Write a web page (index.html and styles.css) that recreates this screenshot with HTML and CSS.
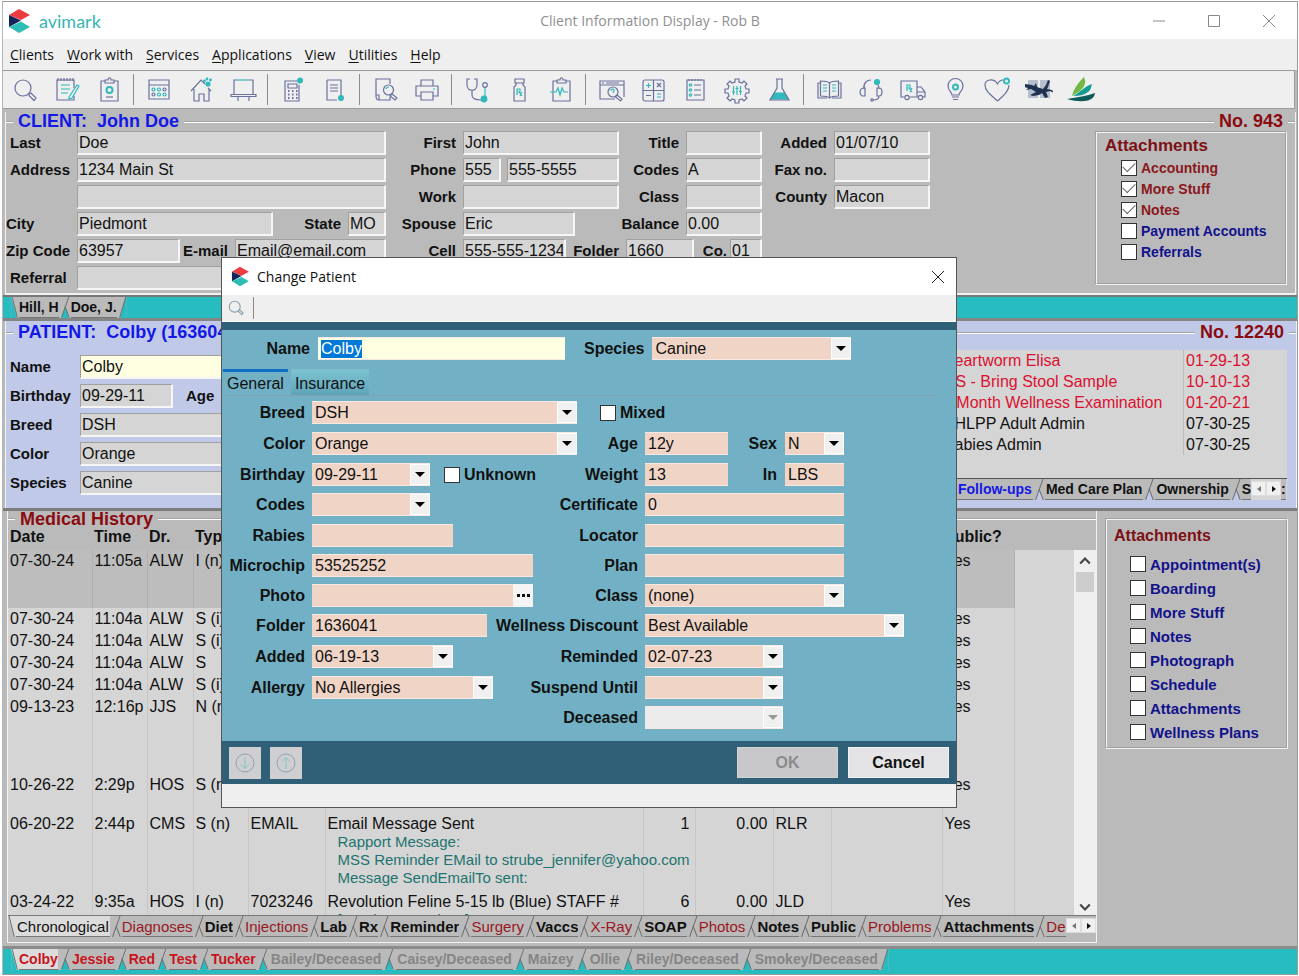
FILE: index.html
```html
<!DOCTYPE html>
<html lang="en">
<head>
<meta charset="utf-8">
<title>Client Information Display</title>
<link rel="stylesheet" href="styles.css">
</head>
<body>
<svg class="defs" aria-hidden="true">
  <symbol id="logo" viewBox="0 0 24 26">
    <path d="M12 1L23 7L14 12L2 7z" fill="#ee3b3f"/>
    <path d="M2 7L14 12.500L2 19z" fill="#13235b"/>
    <path d="M2 19L14 13.500L23 19L12 25z" fill="#2fbdb8"/>
  </symbol>
  <symbol id="edge" viewBox="0 0 12 22">
    <path class="gap" d="M2 22L6 10L10 22z"/>
    <path class="ln" d="M10 0L2.500 21M6 10L10.500 21.500"/>
  </symbol>
  <symbol id="edge-left" viewBox="0 0 8 22">
    <path class="gap" d="M0 0L6 22H0z"/>
    <path class="ln" d="M1 0L6.500 21.500"/>
  </symbol>
  <symbol id="edge-right" viewBox="0 0 10 22">
    <path class="gap" d="M9 0L3 22H10V0z"/>
    <path class="ln" d="M9 0L2.500 21.500"/>
  </symbol>
</svg>
<div class="window">
  <header class="titlebar">
    <div class="brand"><svg class="logo"><use href="#logo"/></svg><span>avimark</span></div>
    <h1>Client Information Display - Rob B</h1>
    <div class="winbtns">
      <button aria-label="Minimize"><svg viewBox="0 0 14 14"><path d="M1 7H13"/></svg></button>
      <button aria-label="Maximize"><svg viewBox="0 0 14 14"><path d="M1.500 1.500H12.500V12.500H1.500z"/></svg></button>
      <button aria-label="Close"><svg viewBox="0 0 14 14"><path d="M1 1L13 13M13 1L1 13"/></svg></button>
    </div>
  </header>
  <nav class="menu">
    <button><u>C</u>lients</button><button><u>W</u>ork with</button><button><u>S</u>ervices</button><button><u>A</u>pplications</button><button><u>V</u>iew</button><button><u>U</u>tilities</button><button><u>H</u>elp</button>
  </nav>
  <div class="toolbar">
    <button aria-label="Search"><svg viewBox="0 0 28 28"><circle cx="12" cy="12" r="8"/><path d="M18 18l2-1 5 5-2 2.500-5-5z"/></svg></button>
    <button aria-label="Notes"><svg viewBox="0 0 28 28"><path d="M21 12V4H4v20h17v-4"/><path d="M5 2v3M8 2v3M11 2v3M14 2v3M17 2v3M20 2v3"/><path class="t" d="M8 9h9M8 13h9M8 17h7M16 21l8-12 2 1-7 12-3 1z"/></svg></button>
    <button aria-label="Clipboard"><svg viewBox="0 0 28 28"><path d="M10 5H6v20h17V5h-4M10 7h9V4h-3c0-3-3-3-3 0h-3z"/><circle class="t thick" cx="14.500" cy="14" r="3"/><path d="M11 21h7"/></svg></button>
    <i></i>
    <button aria-label="Calendar"><svg viewBox="0 0 28 28"><path d="M4 4h20v19H4zM4 9h20"/><g class="t"><circle cx="8.500" cy="13.500" r="1.500"/><circle cx="14" cy="13.500" r="1.500"/></g><circle cx="19.500" cy="13.500" r="1.500"/><circle cx="8.500" cy="18.500" r="1.500"/><g class="t"><circle cx="14" cy="18.500" r="1.500"/><circle cx="19.500" cy="18.500" r="1.500"/></g></svg></button>
    <button aria-label="Boarding"><svg viewBox="0 0 28 28"><path d="M4 15L14 4l4 4M24 15l-3-3M7 13v12h5v-7h5v7h5V13"/><g class="tf"><circle cx="21" cy="8" r="2"/><circle cx="17.500" cy="5" r=".8"/><circle cx="20" cy="3" r=".8"/><circle cx="23.500" cy="4" r=".8"/></g></svg></button>
    <button aria-label="Whiteboard"><svg viewBox="0 0 28 28"><path d="M5 18V4h4M20 4h4v14M2 18.500h25v2H2zM9 21v4M20 21v4"/><path class="t" d="M9 4h11"/></svg></button>
    <i></i>
    <button aria-label="Calculator"><svg viewBox="0 0 28 28"><path d="M20 9v16H6V5h12M9 8h9v4H9z"/><path d="M9 15h1.500M13 15h1.500M17 15h1.500M9 18.500h1.500M13 18.500h1.500M17 18.500h1.500M9 22h1.500M13 22h1.500M17 22h1.500" class="thick"/><circle class="tf" cx="21" cy="4.500" r="2.400"/></svg></button>
    <button aria-label="Invoice"><svg viewBox="0 0 28 28"><path d="M6 4h14v15M16 24H6V4M9 9h8M9 12h8M9 15h8"/><circle class="tf" cx="20" cy="22" r="2.400"/></svg></button>
    <i></i>
    <button aria-label="Find document"><svg viewBox="0 0 28 28"><path d="M19 8V3H5v17c0 2 1 4 3 4h11v-3M5 19h3v5"/><circle cx="17.500" cy="14" r="5"/><path class="t" d="M15 13a3 3 0 0 1 3-2"/><path d="M21 18l5 4-2 2-5-4z"/></svg></button>
    <button aria-label="Print"><svg viewBox="0 0 28 28"><path d="M8 10V4h12v6M8 20H3V10h22v10h-5M8 16h12v8H8z"/><path class="t" d="M20 13h2"/></svg></button>
    <i></i>
    <button aria-label="Examination"><svg viewBox="0 0 28 28"><path d="M7 3H4v6c0 7 10 7 10 0V3h-3M9 14v5c0 4 5 5 9 5"/><path class="t" d="M22 12v9"/><circle cx="22" cy="9" r="2.300"/><circle class="tf" cx="21" cy="23" r="2.800"/></svg></button>
    <button aria-label="Medication"><svg viewBox="0 0 28 28"><path d="M10 3h9v4h-9zM11 7v2l-2 2v14h11V11l-2-2V7"/><path class="t" d="M12 19v-6h3v3h-3M14 16l3 4M17 16l-2 4"/></svg></button>
    <button aria-label="Vitals"><svg viewBox="0 0 28 28"><path d="M10 5H6v20h17V5h-4M10 7h9V4h-3c0-3-3-3-3 0h-3z"/><path class="t" d="M3 16h6l2-4 2 7 2-7 2 4h4"/></svg></button>
    <i></i>
    <button aria-label="Web search"><svg viewBox="0 0 28 28"><path d="M18 23H3V5h24v16M3 9h24M5 7h2M9 7h13"/><circle cx="16" cy="16" r="5"/><path class="t" d="M14 15c0-3 4-2 3 0l-1 2"/><path d="M20 19l5 4-1.500 2-5-4z"/></svg></button>
    <button aria-label="Calculations"><svg viewBox="0 0 28 28"><rect x="4" y="4" width="21" height="21" rx="2"/><path d="M14.500 4v21M4 14.500h21M7 19.500h5M18 7l4 4M22 7l-4 4"/><path class="t" d="M9.500 7v5M7 9.500h5M18 18h4M18 21h4"/></svg></button>
    <button aria-label="Checklist"><svg viewBox="0 0 28 28"><path d="M6 4h17v20H6zM13 9h7M13 14h7M13 19h7M8 3v2M11 3v2M14 3v2M17 3v2M20 3v2"/><g class="t"><circle cx="9.500" cy="9" r="1.200"/><circle cx="9.500" cy="14" r="1.200"/><circle cx="9.500" cy="19" r="1.200"/></g></svg></button>
    <button aria-label="Settings"><svg viewBox="0 0 28 28"><path d="M12 3h4v3l3 1 2-2 3 3-2 2 1 3h3v4h-3l-1 3 2 2-3 3-2-2-3 1v3h-4v-3l-3-1-2 2-3-3 2-2-1-3H2v-4h3l1-3-2-2 3-3 2 2 3-1z"/><path class="t" d="M10.500 10v9M14 10v9M17.500 10v9M9 16h3M12.500 12.500h3M16 15.500h3"/></svg></button>
    <button aria-label="Laboratory"><svg viewBox="0 0 28 28"><path class="tf" d="M10 17h9l4 6H6z"/><path d="M11 3h7M12 3v9L5 24h19l-7-12V3"/></svg></button>
    <i></i>
    <button aria-label="Library"><svg viewBox="0 0 28 28"><path d="M14.500 7c-2-2-6-2-9-2v15c4 0 7 0 9 2 2-2 5-2 9-2V5c-3 0-7 0-9 2zM14.500 7v15M5.500 7H3v15h9M23.500 7H26v15h-9"/><path class="t" d="M8 9h4M8 12h4M8 15h4M17 9h4M17 12h4M17 15h4"/></svg></button>
    <button aria-label="Support"><svg viewBox="0 0 28 28"><path d="M7 13C6 7 10 4 14 4M21 9c1 2 1 3 1 4M7 12c-5 0-5 8-1 8h2v-8zM22 12h-2v8h2c4 0 4-8 0-8zM22 20c0 3-3 4-6 4"/><circle class="tf" cx="20" cy="6" r="2.500"/><circle cx="15" cy="24" r="1.200"/></svg></button>
    <button aria-label="Delivery"><svg viewBox="0 0 28 28"><path d="M5 21H2V5h16v16h-7M18 11h4l4 5v5h-2M18 16h8"/><circle cx="8" cy="21.500" r="2.200"/><circle cx="21.500" cy="21.500" r="2.200"/><path class="t" d="M8 15V9h3v3H8M10 12l3 4M13 12l-2 4"/></svg></button>
    <button aria-label="Ideas"><svg viewBox="0 0 28 28"><path d="M11 19c0-3-4-4-4-9a7.500 7.500 0 0 1 15 0c0 5-4 6-4 9zM11 21h7M12 23.500h5"/><circle class="t thick" cx="14.500" cy="11" r="2.500"/></svg></button>
    <button aria-label="Wellness"><svg viewBox="0 0 28 28"><path d="M14.500 25C8 19 2 15 2 9c0-6 9-7 12.500-1C16 5 18 4 20 4M26 9c0 6-5 10-11.500 16"/><circle class="t thick" cx="23.500" cy="5" r="2.500"/></svg></button>
    <button aria-label="Imaging"><svg viewBox="0 0 28 28"><path d="M3 4h10v18H3zM15 4h10v18H15z" fill="#b8bfce" stroke="none"/><path class="nf" d="M0 8l7 1 2 1 2-3 1 4 6 2 3-4 2-5 2 1-2 6-1 2 5 1 2 3-4-2-4 1 2 5-3 1-3-5-3 2-6 1-3-1 6-3-5-3-5 1 2-2-4-1z"/></svg></button>
    <button aria-label="Card"><svg viewBox="0 0 28 28"><path d="M5 20C7 12 12 6 17 1c1 3 2 5 0 9-2 4-7 7-12 10z" fill="#72b843" stroke="none"/><path d="M6 20c6-3 12-10 19-12-1 3-1 6-4 8-4 3-9 4-15 4z" fill="#119d91" stroke="none"/><path d="M0 23c10-2 20-3 28-6-1 9-14 10-28 6z" fill="#0c5a5a" stroke="none"/></svg></button>
  </div>

  <section class="panel client">
    <div class="caption"><h2 class="blue">CLIENT:&nbsp; John Doe</h2><b>No. 943</b></div>
    <div class="client-body">
      <div class="rows grp-a">
        <div class="row"><label for="c-last">Last</label><input id="c-last" class="grow" value="Doe"></div>
        <div class="row"><label for="c-addr">Address</label><input id="c-addr" class="grow" value="1234 Main St"></div>
        <div class="row"><label for="c-addr2"></label><input id="c-addr2" class="grow" aria-label="Address line 2"></div>
        <div class="row near"><label for="c-city">City</label><input id="c-city" class="w196" value="Piedmont"><label for="c-state" class="mid">State</label><input id="c-state" class="w38" value="MO"></div>
        <div class="row near"><label for="c-zip">Zip Code</label><input id="c-zip" class="w102" value="63957"><label for="c-mail" class="mid">E-mail</label><input id="c-mail" class="w150" value="Email@email.com"></div>
        <div class="row"><label for="c-ref">Referral</label><input id="c-ref" class="grow"></div>
      </div>
      <div class="rows grp-b">
        <div class="row"><label for="c-first">First</label><input id="c-first" class="w155" value="John"><label for="c-title" class="mid">Title</label><input id="c-title" class="w75"></div>
        <div class="row"><label for="c-area">Phone</label><input id="c-area" class="w38" value="555"><input aria-label="Phone number" class="w110" value="555-5555"><label for="c-codes" class="mid">Codes</label><input id="c-codes" class="w75" value="A"></div>
        <div class="row"><label for="c-work">Work</label><input id="c-work" class="w155"><label for="c-class" class="mid">Class</label><input id="c-class" class="w75"></div>
        <div class="row"><label for="c-sp">Spouse</label><input id="c-sp" class="w110" value="Eric"><label for="c-bal" class="mid">Balance</label><input id="c-bal" class="w75" value="0.00"></div>
        <div class="row"><label for="c-cell">Cell</label><input id="c-cell" class="w102" value="555-555-1234"><label for="c-fold" class="mid">Folder</label><input id="c-fold" class="w68" value="1660"><label for="c-co" class="co">Co.</label><input id="c-co" class="w32" value="01"></div>
      </div>
      <div class="rows grp-c">
        <div class="row"><label for="c-added">Added</label><input id="c-added" class="w95" value="01/07/10"></div>
        <div class="row"><label for="c-fax">Fax no.</label><input id="c-fax" class="w95"></div>
        <div class="row"><label for="c-county">County</label><input id="c-county" class="w95" value="Macon"></div>
      </div>
      <aside class="attach small">
        <h3>Attachments</h3>
        <label class="red"><input type="checkbox" checked>Accounting</label>
        <label class="red"><input type="checkbox" checked>More Stuff</label>
        <label class="red"><input type="checkbox" checked>Notes</label>
        <label><input type="checkbox">Payment Accounts</label>
        <label><input type="checkbox">Referrals</label>
      </aside>
    </div>
  </section>

  <div class="strip tabs bold">
    <svg class="el"><use href="#edge-left"/></svg><button>Hill, H</button><svg class="ed"><use href="#edge"/></svg><button>Doe, J.</button><svg class="er"><use href="#edge-right"/></svg>
  </div>

  <section class="panel patient">
    <div class="caption"><h2 class="blue">PATIENT:&nbsp; Colby (1636041)</h2><b>No. 12240</b></div>
    <div class="patient-body">
      <div class="rows grp-p">
        <div class="row"><label for="p-name">Name</label><input id="p-name" class="grow cream" value="Colby"></div>
        <div class="row"><label for="p-bd">Birthday</label><input id="p-bd" class="w92" value="09-29-11"><label for="p-age" class="age">Age</label><input id="p-age" class="grow"></div>
        <div class="row"><label for="p-breed">Breed</label><input id="p-breed" class="grow" value="DSH"></div>
        <div class="row"><label for="p-color">Color</label><input id="p-color" class="grow" value="Orange"></div>
        <div class="row"><label for="p-spec">Species</label><input id="p-spec" class="grow" value="Canine"></div>
      </div>
      <div class="follow">
        <table>
          <tr class="due"><td>Heartworm Elisa</td><td>01-29-13</td></tr>
          <tr class="due"><td>OS - Bring Stool Sample</td><td>10-10-13</td></tr>
          <tr class="due"><td>6 Month Wellness Examination</td><td>01-20-21</td></tr>
          <tr><td>DHLPP Adult Admin</td><td>07-30-25</td></tr>
          <tr><td>Rabies Admin</td><td>07-30-25</td></tr>
        </table>
        <div class="tabs bold">
          <svg class="el"><use href="#edge-left"/></svg><button class="bl">Follow-ups</button><svg class="ed"><use href="#edge"/></svg><button>Med Care Plan</button><svg class="ed"><use href="#edge"/></svg><button>Ownership</button><svg class="ed"><use href="#edge"/></svg><button class="cut">S</button>
          <span class="scrollers"><button class="off" aria-label="Previous tabs"></button><button aria-label="Next tabs"></button></span>
          <button class="cut">:</button>
        </div>
      </div>
    </div>
  </section>

  <section class="medical">
    <div class="history">
      <div class="caption"><h2>Medical History</h2></div>
      <div class="history-body">
        <div class="grid">
          <table>
            <colgroup><col class="c84"><col class="c54"><col class="c47"><col class="c54"><col class="c77"><col class="c318"><col class="c52"><col class="c78"><col class="c58"><col class="c112"><col class="c72"></colgroup>
            <thead><tr><th>Date</th><th>Time</th><th>Dr.</th><th>Type</th><th></th><th></th><th></th><th></th><th></th><th></th><th>Public?</th></tr></thead>
            <tbody>
              <tr class="sel"><td>07-30-24</td><td>11:05a</td><td>ALW</td><td>I (n)</td><td></td><td></td><td></td><td></td><td></td><td></td><td>Yes</td></tr>
              <tr><td>07-30-24</td><td>11:04a</td><td>ALW</td><td>S (i)</td><td></td><td></td><td></td><td></td><td></td><td></td><td>Yes</td></tr>
              <tr><td>07-30-24</td><td>11:04a</td><td>ALW</td><td>S (i)</td><td></td><td></td><td></td><td></td><td></td><td></td><td>Yes</td></tr>
              <tr><td>07-30-24</td><td>11:04a</td><td>ALW</td><td>S</td><td></td><td></td><td></td><td></td><td></td><td></td><td>Yes</td></tr>
              <tr><td>07-30-24</td><td>11:04a</td><td>ALW</td><td>S (i)</td><td></td><td></td><td></td><td></td><td></td><td></td><td>Yes</td></tr>
              <tr class="tall"><td>09-13-23</td><td>12:16p</td><td>JJS</td><td>N (n)</td><td></td><td></td><td></td><td></td><td></td><td></td><td>Yes</td></tr>
              <tr class="two"><td>10-26-22</td><td>2:29p</td><td>HOS</td><td>S (n)</td><td></td><td></td><td></td><td></td><td></td><td></td><td>Yes</td></tr>
              <tr class="tall"><td>06-20-22</td><td>2:44p</td><td>CMS</td><td>S (n)</td><td>EMAIL</td><td>Email Message Sent<p>Rapport Message:</p><p>MSS Reminder EMail to strube_jennifer@yahoo.com</p><p>Message SendEmailTo sent:</p></td><td class="num">1</td><td class="num">0.00</td><td>RLR</td><td></td><td>Yes</td></tr>
              <tr class="tall"><td>03-24-22</td><td>9:35a</td><td>HOS</td><td>I (n)</td><td>7023246</td><td>Revolution Feline 5-15 lb (Blue) STAFF #<p>[Send to Questions]</p></td><td class="num">6</td><td class="num">0.00</td><td>JLD</td><td></td><td>Yes</td></tr>
            </tbody>
          </table>
          <div class="scroll"><button aria-label="Scroll up"><svg viewBox="0 0 10 8"><path d="M1 6L5 2L9 6"/></svg></button><span></span><button aria-label="Scroll down"><svg viewBox="0 0 10 8"><path d="M1 2L5 6L9 2"/></svg></button></div>
        </div>
      </div>
      <div class="tabs mixed">
        <svg class="el"><use href="#edge-left"/></svg><button class="active">Chronological</button><svg class="ed"><use href="#edge"/></svg><button class="r">Diagnoses</button><svg class="ed"><use href="#edge"/></svg><button class="b">Diet</button><svg class="ed"><use href="#edge"/></svg><button class="r">Injections</button><svg class="ed"><use href="#edge"/></svg><button class="b">Lab</button><svg class="ed"><use href="#edge"/></svg><button class="b">Rx</button><svg class="ed"><use href="#edge"/></svg><button class="b">Reminder</button><svg class="ed"><use href="#edge"/></svg><button class="r">Surgery</button><svg class="ed"><use href="#edge"/></svg><button class="b">Vaccs</button><svg class="ed"><use href="#edge"/></svg><button class="r">X-Ray</button><svg class="ed"><use href="#edge"/></svg><button class="b">SOAP</button><svg class="ed"><use href="#edge"/></svg><button class="r">Photos</button><svg class="ed"><use href="#edge"/></svg><button class="b">Notes</button><svg class="ed"><use href="#edge"/></svg><button class="b">Public</button><svg class="ed"><use href="#edge"/></svg><button class="r">Problems</button><svg class="ed"><use href="#edge"/></svg><button class="b">Attachments</button><svg class="ed"><use href="#edge"/></svg><button class="r last">Den</button>
        <span class="scrollers"><button class="off" aria-label="Previous tabs"></button><button aria-label="Next tabs"></button></span>
      </div>
    </div>
    <aside class="attach">
      <h3>Attachments</h3>
      <label><input type="checkbox">Appointment(s)</label>
      <label><input type="checkbox">Boarding</label>
      <label><input type="checkbox">More Stuff</label>
      <label><input type="checkbox">Notes</label>
      <label><input type="checkbox">Photograph</label>
      <label><input type="checkbox">Schedule</label>
      <label><input type="checkbox">Attachments</label>
      <label><input type="checkbox">Wellness Plans</label>
    </aside>
  </section>

  <div class="strip tabs bold pets">
    <svg class="el"><use href="#edge-left"/></svg><button class="active">Colby</button><svg class="ed"><use href="#edge"/></svg><button>Jessie</button><svg class="ed"><use href="#edge"/></svg><button>Red</button><svg class="ed"><use href="#edge"/></svg><button>Test</button><svg class="ed"><use href="#edge"/></svg><button>Tucker</button><svg class="ed"><use href="#edge"/></svg><button class="g">Bailey/Deceased</button><svg class="ed"><use href="#edge"/></svg><button class="g">Caisey/Deceased</button><svg class="ed"><use href="#edge"/></svg><button class="g">Maizey</button><svg class="ed"><use href="#edge"/></svg><button class="g">Ollie</button><svg class="ed"><use href="#edge"/></svg><button class="g">Riley/Deceased</button><svg class="ed"><use href="#edge"/></svg><button class="g">Smokey/Deceased</button><svg class="er"><use href="#edge-right"/></svg>
  </div>

  <div class="dialog" role="dialog" aria-labelledby="dlg-title">
    <div class="dlg-title"><svg class="logo"><use href="#logo"/></svg><h2 id="dlg-title">Change Patient</h2><button aria-label="Close"><svg viewBox="0 0 14 14"><path d="M1 1L13 13M13 1L1 13"/></svg></button></div>
    <div class="dlg-tools"><button aria-label="Search"><svg viewBox="0 0 28 28"><circle cx="12" cy="12" r="8.500"/><path d="M18 18l2-1 5 5-2 2.500-5-5z"/></svg></button><i></i></div>
    <div class="dlg-body">
      <div class="dlg-top">
        <label for="d-name">Name</label><input id="d-name" class="name" value="Colby">
        <label for="d-species">Species</label><span class="combo f198"><select id="d-species"><option>Canine</option></select><b></b></span>
      </div>
      <div class="dlg-tabs"><button class="on">General</button><button>Insurance</button></div>
      <div class="form">
        <div class="line"><label for="d-breed">Breed</label><span class="combo f265"><select id="d-breed"><option>DSH</option></select><b></b></span><label class="chk mixed-chk"><input type="checkbox">Mixed</label></div>
        <div class="line"><label for="d-color">Color</label><span class="combo f265"><select id="d-color"><option>Orange</option></select><b></b></span><label class="second" for="d-age">Age</label><div class="cell"><input id="d-age" class="f83" value="12y"><label for="d-sex">Sex</label><span class="combo f59"><select id="d-sex"><option>N</option></select><b></b></span></div></div>
        <div class="line"><label for="d-bd">Birthday</label><span class="combo f118"><select id="d-bd"><option>09-29-11</option></select><b></b></span><label class="chk unk-chk"><input type="checkbox">Unknown</label><label class="second" for="d-w">Weight</label><div class="cell"><input id="d-w" class="f83" value="13"><label for="d-in">In</label><input id="d-in" class="f59" value="LBS"></div></div>
        <div class="line"><label for="d-codes">Codes</label><span class="combo f118"><select id="d-codes"><option></option></select><b></b></span><label class="second" for="d-cert">Certificate</label><div class="cell"><input id="d-cert" class="f198" value="0"></div></div>
        <div class="line"><label for="d-rab">Rabies</label><input id="d-rab" class="f141"><label class="second" for="d-loc">Locator</label><div class="cell"><input id="d-loc" class="f198"></div></div>
        <div class="line"><label for="d-chip">Microchip</label><input id="d-chip" class="f221" value="53525252"><label class="second" for="d-plan">Plan</label><div class="cell"><input id="d-plan" class="f198"></div></div>
        <div class="line"><label for="d-photo">Photo</label><span class="browse f221"><input id="d-photo"><button aria-label="Browse"><i></i><i></i><i></i></button></span><label class="second" for="d-class">Class</label><div class="cell"><span class="combo f198"><select id="d-class"><option>(none)</option></select><b></b></span></div></div>
        <div class="line"><label for="d-folder">Folder</label><input id="d-folder" class="f175" value="1636041"><label class="second" for="d-disc">Wellness Discount</label><div class="cell"><span class="combo f259"><select id="d-disc"><option>Best Available</option></select><b></b></span></div></div>
        <div class="line"><label for="d-added">Added</label><span class="combo f141"><select id="d-added"><option>06-19-13</option></select><b></b></span><label class="second" for="d-rem">Reminded</label><div class="cell"><span class="combo f138"><select id="d-rem"><option>02-07-23</option></select><b></b></span></div></div>
        <div class="line"><label for="d-all">Allergy</label><span class="combo f181"><select id="d-all"><option>No Allergies</option></select><b></b></span><label class="second" for="d-sus">Suspend Until</label><div class="cell"><span class="combo f138"><select id="d-sus"><option></option></select><b></b></span></div></div>
        <div class="line"><label class="second" for="d-dec">Deceased</label><div class="cell"><span class="combo disabled f138"><select id="d-dec" disabled><option></option></select><b></b></span></div></div>
      </div>
    </div>
    <div class="dlg-foot">
      <button class="sq" aria-label="Next"><svg viewBox="0 0 24 24"><circle cx="12" cy="12" r="9"/><path d="M12 6v11M8 13.500l4 4 4-4"/></svg></button>
      <button class="sq" aria-label="Previous"><svg viewBox="0 0 24 24"><circle cx="12" cy="12" r="9"/><path d="M12 18V7M8 10.500l4-4 4 4"/></svg></button>
      <button class="cmd ok" disabled>OK</button><button class="cmd">Cancel</button>
    </div>
    <div class="dlg-status"></div>
  </div>
</div>
<script src="script.js"></script>
</body>
</html>
```
FILE: script.js
```js
document.getElementById('d-name').select();
```
FILE: styles.css
```css
* { box-sizing: border-box; }
body { margin: 0; background: #fff; font: 16px "Liberation Sans", Arial, sans-serif; color: #111; }
button { font: inherit; color: inherit; background: none; border: 0; padding: 0; margin: 0; }
input, select { font: inherit; color: inherit; margin: 0; min-width: 0; border-radius: 0; outline: 0; }
h1, h2, h3, p { margin: 0; }
svg { display: block; flex: none; fill: none; }
.defs { position: absolute; width: 0; height: 0; }
.window { position: relative; display: flex; flex-direction: column; min-height: 974px; margin: 1px 1px 1px 2px; border: 1px solid #9a9a9a; border-left-color: #b5b5b5; background: #bababa; overflow: hidden; }

/* title bar, menu, toolbar */
.titlebar { display: grid; grid-template-columns: 1fr auto 1fr; align-items: center; height: 37px; background: #fff; }
.brand { display: flex; align-items: center; gap: 8px; padding-left: 4px; font: 18px Lato, sans-serif; color: #37b5b4; }
.logo { width: 24px; height: 26px; }
.titlebar h1 { font: 14px "Open Sans", sans-serif; color: #8f8f8f; }
.winbtns { display: flex; justify-content: flex-end; gap: 41px; padding-right: 21px; }
.winbtns svg, .dlg-title button svg { width: 14px; height: 14px; stroke: #888; }
.menu { display: flex; align-items: center; gap: 13px; height: 31px; padding-left: 7px; background: #efefef; font: 14px "Open Sans", sans-serif; }
.menu u { text-underline-offset: 2px; }
.toolbar { display: flex; align-items: center; height: 39px; margin-right: 2px; padding-left: 1px; background: #efefef; border: 1px solid #9c9c9c; border-left: 0; }
.toolbar button { display: flex; justify-content: center; width: 42px; }
.toolbar i { width: 1px; height: 31px; margin: 0 4px 0 3px; background: #8c8c8c; }
.toolbar svg { width: 28px; height: 28px; stroke: #6a719c; stroke-width: 1.200; }
.toolbar .t { stroke: #2fb9ba; }
.toolbar .thick { stroke-width: 2; }
.toolbar .tf { fill: #2fb9ba; stroke: #2fb9ba; }
.toolbar .nf { fill: #1f3350; stroke: none; }

/* framed panels */
.caption { position: relative; z-index: 1; display: flex; align-items: center; gap: 5px; height: 19px; white-space: nowrap; }
.caption::before, .caption::after { content: ""; box-sizing: content-box; width: 7px; height: 0; border-top: 1px solid #a2a2a2; border-bottom: 1px solid #fff; }
.caption h2 { display: flex; flex: 1; align-items: center; gap: 5px; font: bold 18px/19px "Liberation Sans", Arial, sans-serif; color: #8a0b10; }
.caption h2::after { content: ""; flex: 1; border-top: 1px solid #a2a2a2; border-bottom: 1px solid #fff; }
.caption h2.blue { color: #1418e6; }
.caption b { font-size: 18px; color: #8a0b10; }
.panel { position: relative; border: 1px solid #f2f2f2; border-top: 0; margin: 0 1px 0 2px; }
.client { margin-top: 3px; border-bottom: 2px solid #f2f2f2; }
.client-body { display: flex; }
.rows .row { display: flex; align-items: center; height: 27px; padding-bottom: 3px; }
.row label { font-size: 15px; font-weight: bold; white-space: nowrap; padding-bottom: 2px; }
.row input { height: 24px; padding: 0 1px; background: #d5d5d5; border: 1px solid #a0a0a0; border-right: 2px solid #f6f6f6; border-bottom: 2px solid #f6f6f6; }
.row .grow { flex: 1; width: 0; }
.w32 { width: 32px; } .w38 { width: 38px; } .w68 { width: 68px; } .w75 { width: 76px; } .w92 { width: 93px; } .w95 { width: 96px; }
.w102 { width: 103px; } .w110 { width: 112px; } .w150 { width: 151px; } .w155 { width: 156px; } .w196 { width: 196px; }
.row .mid { flex: 1; text-align: right; padding-right: 7px; }
.row .co { width: 36px; padding-right: 3px; text-align: right; }
.grp-a { width: 380px; }
.grp-a .row > label:first-child { width: 71px; padding-left: 4px; }
.grp-a .near > label:first-child { padding-left: 0; }
.grp-b { width: 376px; }
.grp-b .row > label:first-child { width: 77px; padding-right: 7px; text-align: right; }
.grp-b input + input { margin-left: 6px; }
.grp-c { width: 168px; }
.grp-c .row > label:first-child { flex: 1; padding-right: 7px; text-align: right; }

/* attachment lists */
.attach { display: flex; flex-direction: column; border: 2px groove #f4f4f4; margin-left: auto; }
.attach h3 { font-size: 16px; color: #7d1015; }
.attach label { display: flex; align-items: center; gap: 4px; padding-left: 24px; font-weight: bold; font-size: 15px; color: #12128c; white-space: nowrap; }
.attach.small { width: 192px; height: 154px; margin-right: 8px; padding: 2px 0 0 8px; }
.attach.small h3 { font-size: 17px; line-height: 22px; }
.attach.small label { height: 21px; padding-left: 16px; font-size: 14px; }
.attach label.red { color: #8b181c; }
input[type="checkbox"] { appearance: none; display: grid; place-items: center; width: 16px; height: 16px; flex: none; margin: 0; background: #fff; border: 1px solid #333; }
input[type="checkbox"]:checked::before { content: ""; width: 11px; height: 6px; border: solid #666; border-width: 0 0 1px 1px; transform: translateY(-2px) rotate(-45deg); }

/* slanted tabs */
.tabs { --gap: #bababa; display: flex; align-items: stretch; height: 22px; font-size: 15px; }
.tabs > button { background: #bababa; border-bottom: 1px solid #777; line-height: 19px; white-space: nowrap; }
.tabs svg { height: 22px; background: #bababa; stroke: #6b6b6b; }
.el { width: 8px; } .ed { width: 12px; } .er { width: 10px; }
.gap { fill: var(--gap); stroke: none; }
.bold { font-weight: bold; }
.strip { --gap: #27bdc0; height: 26px; padding: 0 0 2px 8px; background: #27bdc0; border-top: 2px solid #777; border-bottom: 3px solid #858585; font-size: 14px; }
.strip svg, .strip > button { height: 21px; }
.mixed .b { font-weight: bold; }
.mixed .r { color: #99181e; }
.mixed .active { padding: 0 1px; }
.tabs .active { background: #dcdcdc; }
.mixed .el, .pets .el { background: #dcdcdc; }
.scrollers { display: flex; align-self: flex-start; }
.scrollers button { width: 15px; height: 15px; margin-top: 2px; background: #f0f0f0; border: 1px solid #ddd; display: grid; place-items: center; }
.scrollers button::before { content: ""; border: solid transparent; border-width: 3px 0 3px 4px; border-left-color: #111; }
.scrollers .off::before { border-width: 3px 4px 3px 0; border-right-color: #777; }

/* patient */
.patient { background: #c0cae8; border-bottom: 0; margin-right: 0; padding-top: 2px; }
.patient-body { display: flex; justify-content: space-between; padding: 13px 9px 8px 4px; }
.grp-p { width: 360px; }
.grp-p .row { height: 29px; padding-bottom: 5px; }
.grp-p .row > label:first-child { width: 70px; }
.grp-p .age { width: 60px; padding-left: 13px; }
.grp-p .cream { background: #ffffe1; }
.follow { width: 346px; margin-top: -5px; background: #d5d5d5; display: flex; flex-direction: column; }
.follow table { border-spacing: 0; }
.follow td { padding: 0 0 0 2px; line-height: 21px; height: 21px; white-space: nowrap; }
.follow td + td { width: 104px; border-left: 1px solid #bbb; }
.follow .due { color: #dc1030; }
.follow .tabs { --gap: #c0cae8; margin-top: auto; padding-left: 8px; border-top: 1px solid #555; overflow: hidden; font-size: 14px; }
.follow .tabs > button { padding: 0 1px; }
.follow .tabs > .cut { padding: 0; }
.follow .bl { color: #1418e6; }

/* history */
.medical { flex: 1; display: flex; align-items: flex-start; gap: 8px; padding: 0 9px 3px 4px; border-top: 3px solid #7d7d7d; }
.history { flex: 1; min-width: 0; align-self: stretch; display: flex; flex-direction: column; border: 1px solid #f2f2f2; border-top: 0; padding-bottom: 5px; }
.history .caption { height: 16px; }
.history .caption::after { display: none; }
.history-body { flex: 1 1 0; overflow: hidden; background: #d5d5d5; }
.grid { display: flex; justify-content: space-between; height: 391px; background: linear-gradient(#bababa 23px, #d5d5d5 23px); }
.grid table { table-layout: fixed; width: 1006px; border-collapse: collapse; align-self: flex-start; }
.c84 { width: 84px; } .c54 { width: 55px; } .c47 { width: 46px; } .c77 { width: 77px; } .c318 { width: 318px; } .c52 { width: 52px; } .c78 { width: 78px; } .c58 { width: 58px; } .c112 { width: 111px; } .c72 { width: 72px; }
.grid th { height: 23px; padding: 0 0 0 2px; text-align: left; line-height: 19px; vertical-align: top; }
.grid td { height: 22px; padding: 2px 0 0 2px; line-height: 18px; vertical-align: top; white-space: nowrap; border-right: 1px solid #c6c6c6; }
.grid .sel td { height: 58px; background: #bdbdbd; border-color: #b0b0b0; }
.grid .tall td { height: 78px; }
.grid .two td { height: 39px; }
.grid td.num { padding-right: 5px; text-align: right; }
.grid p { padding-left: 10px; font-size: 15px; line-height: 18px; color: #1c7470; }
.scroll { width: 22px; margin-top: 23px; background: #efefef; display: flex; flex-direction: column; align-items: center; }
.scroll svg { width: 12px; height: 10px; margin: 6px; stroke: #444; stroke-width: 1.800; }
.scroll span { width: 18px; height: 20px; background: #cdcdcd; margin-bottom: auto; }
.history .tabs { border-top: 1px solid #777; overflow: hidden; }
.history .last { flex: 1; width: 0; overflow: hidden; text-align: left; }
.medical .attach { width: 183px; margin-top: 7px; padding: 5px 0 3px 7px; }
.medical .attach h3 { line-height: 22px; margin-bottom: 5px; }
.medical .attach label { height: 24px; padding-left: 16px; }
.pets { height: 28px; padding-bottom: 4px; border-bottom: 0; border-top: 3px solid #8c8c8c; color: #c8141c; }
.pets .ed { width: 14px; }
.pets .g { padding: 0 1px; color: #858585; }

/* change patient dialog */
.dialog { position: absolute; z-index: 2; left: 218px; top: 255px; width: 736px; background: #efefef; border: 1px solid #555; }
.dialog .logo { width: 20px; height: 21px; }
.dlg-title { display: flex; align-items: center; gap: 7px; height: 37px; padding: 0 11px 0 8px; background: #fff; }
.dlg-title h2 { flex: 1; font: 14px "Open Sans", sans-serif; color: #111; }
.dlg-title button svg { stroke: #222; }
.dlg-tools { display: flex; align-items: center; gap: 8px; height: 27px; padding-left: 5px; border-bottom: 1px solid #fff; }
.dlg-tools svg { width: 18px; height: 18px; stroke: #8ba0ad; stroke-width: 1.800; }
.dlg-tools i { width: 1px; height: 22px; background: #888; }
.dlg-body { background: #72b1c5; border-top: 8px solid #2f6077; padding: 7px 0 5px 1px; }
.dialog label { font-weight: bold; white-space: nowrap; }
.dlg-top { display: flex; align-items: center; gap: 8px; }
.dlg-top label:first-child { width: 87px; text-align: right; }
.dialog input:not([type]), .dialog select { height: 23px; padding: 0 3px; background: #f0d5c6; border: 0; border-bottom: 1px solid #f7e9e1; border-top: 1px solid #f7e9e1; }
.dialog .dlg-top .name:not([type]) { width: 247px; margin-right: 11px; background: #ffffe1; }
.dialog input::selection { background: #0078d7; color: #fff; }
.combo { display: grid; }
.combo select { grid-area: 1 / 1; width: 100%; appearance: none; }
.combo b { grid-area: 1 / 1; justify-self: end; display: grid; place-items: center; width: 20px; height: 21px; margin-top: 1px; background: #f0f0f0; border: 1px solid #fff; pointer-events: none; }
.combo b::before { content: ""; border: solid transparent; border-width: 5px 5px 0 5px; border-top-color: #000; }
.dialog .disabled select { background: #ececec; opacity: 1; }
.combo.disabled b::before { border-top-color: #999; }
.dlg-tabs { display: flex; gap: 3px; height: 27px; margin: 9px 17px 5px 0; border-bottom: 1px solid #7fa3b0; }
.dlg-tabs button { padding: 3px 4px 0; height: 26px; border-top: 1px solid #7dbdcd; background: linear-gradient(#7cc3d1, #5fa3b8); }
.dlg-tabs .on { border-top: 3px solid #0e6fc4; padding-top: 1px; background: #72b1c5; }
.form { display: grid; grid-template-rows: 31px 31px 30px 31px 30px 30px 30px 31px 31px 30px 30px; }
.line { display: flex; align-items: center; height: 23px; }
.line > label:first-child:not(.second) { width: 82px; margin-right: 7px; text-align: right; }
.line .second { flex: 1; padding-right: 7px; text-align: right; }
.cell { display: flex; align-items: center; width: 311px; }
.cell label { width: 57px; padding-right: 8px; text-align: right; }
.chk { display: flex; align-items: center; gap: 4px; }
.mixed-chk { margin-left: 23px; }
.unk-chk { margin-left: 14px; }
.f59 { width: 59px; } .f83 { width: 83px; } .f118 { width: 118px; } .f138 { width: 138px; } .f141 { width: 141px; } .f175 { width: 175px; } .f181 { width: 181px; } .f198 { width: 199px; } .f221 { width: 221px; } .f259 { width: 259px; } .f265 { width: 265px; }
.browse { display: flex; }
.browse input { flex: 1; width: 0; }
.browse button { display: flex; align-items: center; justify-content: center; gap: 2px; width: 20px; background: #f4f4f4; }
.browse i { width: 3px; height: 3px; background: #111; }
.dlg-foot { display: flex; align-items: center; height: 43px; padding: 0 7px; background: #2f6077; }
.sq { display: grid; place-items: center; width: 32px; height: 32px; margin-right: 9px; background: #cfcfd1; }
.sq svg { width: 24px; height: 24px; stroke: #93a0b4; }
.sq path { stroke: #7fc4c6; }
.cmd { width: 101px; height: 31px; margin-left: 10px; background: #e4e4e6; border: 1px solid #f2f2f2; font-weight: bold; }
.cmd.ok { margin-left: auto; background: #c8c8cb; border-color: #d2d2d2; color: #8b8b8b; }
.dlg-status { height: 23px; }
```
